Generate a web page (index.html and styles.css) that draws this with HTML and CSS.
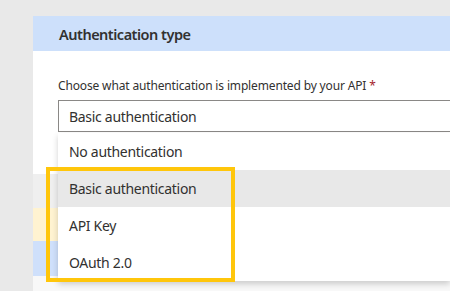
FILE: index.html
```html
<!DOCTYPE html>
<html lang="en">

<head>
    <meta charset="UTF-8">
    <meta name="viewport" content="width=device-width, initial-scale=1.0">
    <link rel="stylesheet" href="styles.css">
</head>

<body>
    <div class="panel">
        <div class="panel-header">Authentication type</div>
        <div class="panel-body">
            <label class="field-label" for="auth">Choose what authentication is implemented by your API <span class="required">*</span></label>
            <div class="select" id="auth">Basic authentication</div>
        </div>
        <div class="band band-gray"></div>
        <div class="band band-yellow"></div>
        <div class="band band-blue"></div>
        <div class="band band-white"></div>

        <ul class="options">
            <li class="option">No authentication</li>
            <li class="option selected">Basic authentication</li>
            <li class="option">API Key</li>
            <li class="option">OAuth 2.0</li>
        </ul>
        <div class="highlight"></div>
    </div>
</body>

</html>
```

FILE: styles.css
```css
body {
    margin: 0;
    height: 291px;
    overflow: hidden;
    background-color: #e9e9e9;
    font-family: "Segoe UI", "Noto Sans", sans-serif;
    color: #323130;
}

.panel {
    position: relative;
    margin: 16px 0 0 33px;
    background-color: #ffffff;
}

.panel-header {
    height: 35px;
    line-height: 36px;
    padding-left: 26px;
    background-color: #cde0fb;
    font-size: 14.5px;
    font-weight: 600;
    letter-spacing: -0.5px;
}

.panel-body {
    padding: 27px 0 42px 25px;
}

.field-label {
    display: block;
    font-size: 12px;
    line-height: 16px;
    margin-bottom: 6px;
    letter-spacing: -0.15px;
}

.required {
    color: #a4262c;
}

.select {
    height: 30px;
    line-height: 31px;
    padding-left: 10px;
    border: 1px solid #8a8886;
    border-right: none;
    font-size: 14px;
    letter-spacing: -0.3px;
}

.band {
    height: 34px;
}

.band-gray {
    background-color: #efefef;
}

.band-yellow {
    height: 33px;
    background-color: #fff3d1;
}

.band-blue {
    height: 35px;
    background-color: #cfe0fb;
}

.band-white {
    height: 20px;
    background-color: #f8f8f8;
}

.options {
    position: absolute;
    top: 117px;
    left: 25px;
    right: 0;
    margin: 0;
    padding: 0;
    list-style: none;
    background-color: #ffffff;
    box-shadow: 0 3px 6px rgba(0, 0, 0, 0.18);
}

.option {
    height: 37px;
    line-height: 38px;
    padding-left: 11px;
    font-size: 14px;
    letter-spacing: -0.3px;
}

.selected {
    background-color: #e8e8e8;
}

.highlight {
    position: absolute;
    top: 151px;
    left: 13px;
    width: 181px;
    height: 107px;
    border: 4px solid #ffc60b;
}
```
